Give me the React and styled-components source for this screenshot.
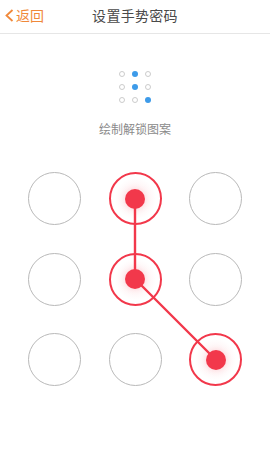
import * as React from "react"
import styled, { createGlobalStyle } from "styled-components"

const RED = "#f2384b"
const ORANGE = "#f0883a"

const pattern = [1, 4, 8]
const miniActive = [1, 4, 8]

export default function App() {
  const cell = 53
  const step = 80.5
  const center = (i) => ({
    x: (i % 3) * step + cell / 2,
    y: Math.floor(i / 3) * step + cell / 2,
  })
  const points = pattern.map((i) => center(i))
  const path = points.map((p) => `${p.x},${p.y}`).join(" ")

  return (
    <Page>
      <GlobalStyle />
      <Header>
        <BackButton>
          <svg width="9" height="13" viewBox="0 0 9 13">
            <polyline points="7.5,1 1.5,6.5 7.5,12" fill="none" stroke={ORANGE} strokeWidth="1.8" />
          </svg>
          <span>返回</span>
        </BackButton>
        <Title>设置手势密码</Title>
        <span />
      </Header>

      <Preview>
        {Array.from({ length: 9 }).map((_, i) => (
          <MiniDot key={i} active={miniActive.includes(i)} />
        ))}
      </Preview>
      <Hint>绘制解锁图案</Hint>

      <Board>
        <Lines width="214" height="214" viewBox="0 0 214 214">
          <polyline points={path} fill="none" stroke={RED} strokeWidth="2.4" strokeLinejoin="round" />
        </Lines>
        {Array.from({ length: 9 }).map((_, i) => (
          <Node key={i} selected={pattern.includes(i)}>
            {pattern.includes(i) && <Dot />}
          </Node>
        ))}
      </Board>
    </Page>
  )
}

const GlobalStyle = createGlobalStyle`
  body {
    margin: 0;
    background: #ffffff;
    font-family: "Noto Sans CJK SC", "Noto Sans", sans-serif;
  }
`

const Page = styled.div`
  width: 270px;
  height: 450px;
  background: #ffffff;
  display: flex;
  flex-direction: column;
  align-items: center;
`

const Header = styled.div`
  width: 100%;
  height: 30px;
  padding-bottom: 3px;
  border-bottom: 1px solid #e6e6e6;
  display: grid;
  grid-template-columns: 1fr auto 1fr;
  align-items: center;
  box-sizing: content-box;
`

const BackButton = styled.div`
  display: flex;
  align-items: center;
  gap: 2px;
  padding-left: 5px;
  color: ${ORANGE};
  font-size: 14px;
  line-height: 20px;
`

const Title = styled.div`
  color: #4a4a4a;
  font-size: 14px;
  line-height: 20px;
  letter-spacing: 0.3px;
`

const Preview = styled.div`
  margin-top: 37px;
  display: grid;
  grid-template-columns: repeat(3, 6px);
  grid-auto-rows: 6px;
  gap: 7px;
`

const MiniDot = styled.div`
  width: 6px;
  height: 6px;
  border-radius: 50%;
  box-sizing: border-box;
  background: ${(p) => (p.active ? "#3d9be9" : "transparent")};
  border: ${(p) => (p.active ? "none" : "1px solid #cccccc")};
`

const Hint = styled.div`
  margin-top: 18px;
  color: #8a8a8a;
  font-size: 12px;
  line-height: 16px;
`

const Board = styled.div`
  position: relative;
  margin-top: 35px;
  display: grid;
  grid-template-columns: repeat(3, 53px);
  grid-auto-rows: 53px;
  gap: 27.5px;
`

const Lines = styled.svg`
  position: absolute;
  left: 0;
  top: 0;
  z-index: 0;
`

const Node = styled.div`
  position: relative;
  z-index: 1;
  width: 53px;
  height: 53px;
  border-radius: 50%;
  box-sizing: border-box;
  border: ${(p) => (p.selected ? `2px solid ${RED}` : "1px solid #b9b9b9")};
  display: flex;
  align-items: center;
  justify-content: center;
  background: ${(p) =>
    p.selected
      ? "radial-gradient(circle, rgba(242,56,75,0.08) 0%, rgba(242,56,75,0.03) 45%, rgba(255,255,255,0) 60%)"
      : "transparent"};
`

const Dot = styled.div`
  width: 20px;
  height: 20px;
  border-radius: 50%;
  background: ${RED};
  box-shadow: 0 0 4px 2px rgba(242, 56, 75, 0.1);
`
